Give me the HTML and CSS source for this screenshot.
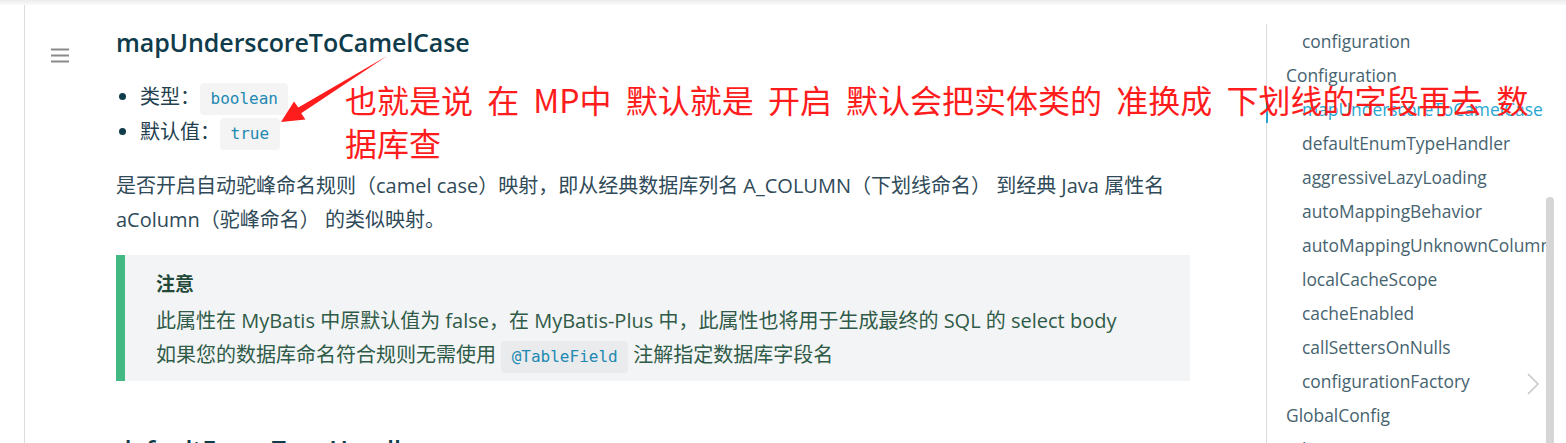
FILE: index.html
```html
<!DOCTYPE html>
<html lang="zh-CN">
<head>
<meta charset="utf-8">
<title>mapUnderscoreToCamelCase</title>
<link rel="stylesheet" href="styles.css">
</head>
<body>
<div class="topshade"></div>
<div class="page">
  <div class="leftbar"></div>
  <div class="menu">
    <svg class="burger" width="18" height="15" viewBox="0 0 18 15">
      <rect x="0" y="0.5" width="18" height="2" fill="#8a8a8a"/>
      <rect x="0" y="6.5" width="18" height="2" fill="#8a8a8a"/>
      <rect x="0" y="12.5" width="18" height="2" fill="#8a8a8a"/>
    </svg>
  </div>
  <main class="content">
    <h1 class="title">mapUnderscoreToCamelCase</h1>
    <ul class="props">
      <li>类型：<code class="chip">boolean</code></li>
      <li>默认值：<code class="chip">true</code></li>
    </ul>
    <p class="desc">是否开启自动驼峰命名规则（camel case）映射，即从经典数据库列名 A_COLUMN（下划线命名） 到经典 Java 属性名 aColumn（驼峰命名） 的类似映射。</p>
    <div class="tip">
      <p class="tip-title">注意</p>
      <p class="tip-text">此属性在 MyBatis 中原默认值为 false，在 MyBatis-Plus 中，此属性也将用于生成最终的 SQL 的 select body<br>如果您的数据库命名符合规则无需使用 <code class="chip chip-dark">@TableField</code> 注解指定数据库字段名</p>
    </div>
    <h2 class="next">defaultEnumTypeHandler</h2>
  </main>
  <aside class="toc">
    <ul class="toc-list">
      <li class="lv3">configuration</li>
      <li class="lv2">Configuration</li>
      <li class="lv3 active">mapUnderscoreToCamelCase</li>
      <li class="lv3">defaultEnumTypeHandler</li>
      <li class="lv3">aggressiveLazyLoading</li>
      <li class="lv3">autoMappingBehavior</li>
      <li class="lv3">autoMappingUnknownColumnBehavior</li>
      <li class="lv3">localCacheScope</li>
      <li class="lv3">cacheEnabled</li>
      <li class="lv3">callSettersOnNulls</li>
      <li class="lv3">configurationFactory</li>
      <li class="lv2">GlobalConfig</li>
      <li class="lv3">banner</li>
    </ul>
  </aside>
  <div class="scrolltrack"><div class="thumb"></div></div>
</div>

<svg class="chevron" width="14" height="24" viewBox="0 0 14 24">
  <polyline points="2,2 12,12 2,22" fill="none" stroke="#c8c8c8" stroke-width="1.6"/>
</svg>

<svg class="arrow" width="1566" height="443" viewBox="0 0 1566 443">
  <polygon points="281,122 294,101.5 298.3,107.6 387,56 301.2,113.2 305.4,119.5" fill="#ff1c1c"/>
</svg>
<div class="note">也就是说 在 MP中 默认就是 开启 默认会把实体类的 准换成 下划线的字段再去 数<br>据库查</div>
</body>
</html>
```
FILE: styles.css
```css
html, body {
  margin: 0;
  padding: 0;
}
body {
  width: 1566px;
  height: 443px;
  overflow: hidden;
  position: relative;
  background: #fff;
  font-family: "Open Sans", "Noto Sans CJK SC", sans-serif;
  color: #2c3e50;
}
.topshade {
  height: 5px;
  background: linear-gradient(#ececec, #fafafa);
}
.page {
  display: flex;
  height: 438px;
}
.leftbar {
  width: 24px;
  flex: none;
  border-right: 1px solid #dcdcdc;
}
.menu {
  width: 91px;
  flex: none;
  padding-left: 26px;
  padding-top: 43px;
  box-sizing: border-box;
}
.burger {
  display: block;
}
.content {
  width: 1074px;
  flex: none;
  padding-top: 19px;
}
.title {
  margin: 0;
  font-size: 25px;
  line-height: 36px;
  font-weight: 600;
  color: #0f3b4a;
  letter-spacing: -0.1px;
}
.props {
  margin: 19px 0 0;
  padding-left: 24px;
  list-style: none;
}
.props li {
  position: relative;
  line-height: 35px;
  height: 35px;
  font-size: 20px;
  color: #22404e;
}
.props li::before {
  content: "";
  position: absolute;
  left: -21px;
  top: 14px;
  width: 7px;
  height: 7px;
  border-radius: 50%;
  background: #0f3b4a;
}
.chip {
  display: inline-block;
  font-family: "DejaVu Sans Mono", "Liberation Mono", monospace;
  font-size: 16px;
  line-height: 20px;
  padding: 6px 10.5px;
  border-radius: 4px;
  background: #f4f4f4;
  color: #2289b2;
  vertical-align: middle;
}
.chip-dark {
  background: #e9ebed;
}
.desc {
  margin: 20px 0 0;
  font-size: 20px;
  line-height: 34px;
  color: #2f4a58;
}
.tip {
  margin-top: 18px;
  background: #f3f4f5;
  border-left: 9px solid #42b983;
  padding: 12px 20px 8px 31px;
  color: #2f5b48;
}
.tip-title {
  margin: 0 0 3px;
  font-weight: 700;
  font-size: 19px;
  line-height: 34px;
  color: #234a39;
}
.tip-text {
  margin: 0;
  font-size: 20px;
  line-height: 34px;
}
.next {
  margin: 50px 0 0;
  font-size: 25px;
  line-height: 36px;
  font-weight: 600;
  color: #0f3b4a;
}
.toc {
  margin-left: 76px;
  width: 280px;
  flex: none;
  overflow: hidden;
  padding-top: 19px;
}
.toc-list {
  margin: 0;
  padding: 0;
  list-style: none;
  border-left: 1px solid #dcdcdc;
}
.toc-list li {
  position: relative;
  height: 34px;
  line-height: 34px;
  font-size: 17.4px;
  color: #46636f;
  white-space: nowrap;
}
.toc-list .lv2 {
  padding-left: 19px;
}
.toc-list .lv3 {
  padding-left: 35px;
}
.toc-list .active {
  color: #27a6d2;
}
.toc-list .active::before {
  content: "";
  position: absolute;
  left: -1px;
  top: 3px;
  width: 2px;
  height: 28px;
  background: #27a6d2;
}
.scrolltrack {
  width: 8px;
  flex: none;
  padding-top: 192px;
  box-sizing: border-box;
}
.thumb {
  height: 300px;
  background: #d6d6d6;
  border-radius: 4px 4px 0 0;
}
.chevron {
  position: absolute;
  left: 1526px;
  top: 372px;
}
.arrow {
  position: absolute;
  left: 0;
  top: 0;
  pointer-events: none;
}
.note {
  position: absolute;
  left: 345px;
  top: 78px;
  font-family: "Noto Sans CJK SC", sans-serif;
  font-size: 32px;
  line-height: 43px;
  color: #ff1c1c;
  white-space: nowrap;
  word-spacing: 7px;
}
```
